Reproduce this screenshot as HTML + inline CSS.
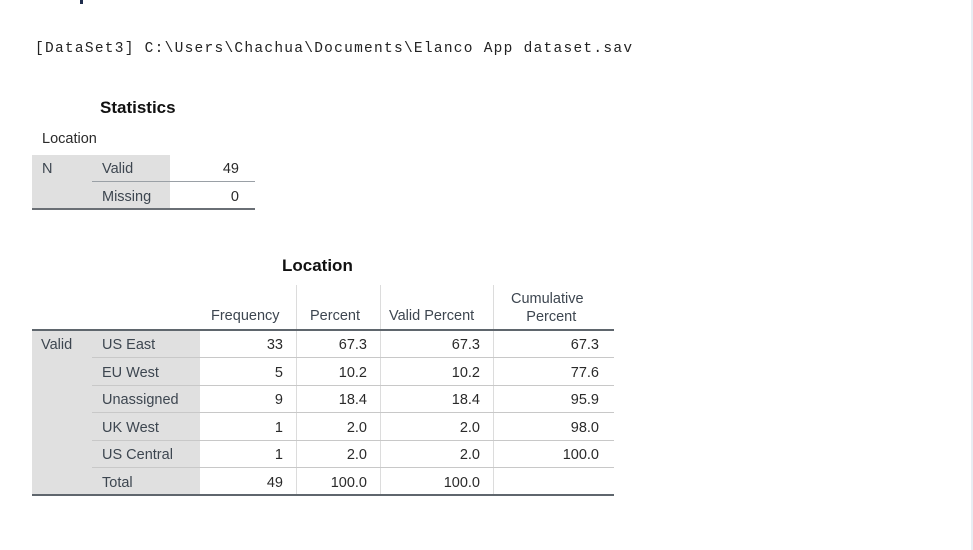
<!DOCTYPE html>
<html><head><style>
body{margin:0;width:973px;height:550px;background:#fff;position:relative;overflow:hidden;font-family:"Liberation Sans",sans-serif;}
.a{position:absolute;white-space:nowrap;}
.t{font-size:14.5px;color:#2a2a2a;}
.l{color:#3d4650;font-size:14.5px;}
.r{text-align:right;}
.g{position:absolute;background:#e0e0e0;}
.h{position:absolute;height:1px;background:#c8c8c8;}
.v{position:absolute;width:1px;background:#dcdcdc;}
</style></head><body>
<div style="position:absolute;left:80px;top:0;width:3px;height:4px;background:#1f2d4d"></div>
<div style="position:absolute;left:971px;top:0;width:2px;height:550px;background:#e8edf3"></div>
<div class="a" style="left:35px;top:41px;font-family:'Liberation Mono',monospace;font-size:14.5px;letter-spacing:1.27px;color:#222">[DataSet3] C:\Users\Chachua\Documents\Elanco App dataset.sav</div>
<div class="a" style="left:100px;top:98px;font-weight:bold;font-size:17px;color:#111">Statistics</div>
<div class="a t" style="left:42px;top:131px">Location</div>
<div class="g" style="left:32px;top:155px;width:138px;height:54px"></div>
<div class="h" style="left:92px;top:181px;width:163px;background:#9aa0a6"></div>
<div style="position:absolute;left:32px;top:208px;width:223px;height:2px;background:#6a6f75"></div>
<div class="a l" style="left:42px;top:161px">N</div>
<div class="a l" style="left:102px;top:161px">Valid</div>
<div class="a l" style="left:102px;top:189px">Missing</div>
<div class="a t r" style="left:180px;width:59px;top:161px">49</div>
<div class="a t r" style="left:180px;width:59px;top:189px">0</div>

<div class="a" style="left:282px;top:256px;font-weight:bold;font-size:17px;color:#111">Location</div>
<div class="g" style="left:32px;top:330px;width:168px;height:165px"></div>
<div class="v" style="left:296px;top:285px;height:210px"></div>
<div class="v" style="left:380px;top:285px;height:210px"></div>
<div class="v" style="left:493px;top:285px;height:210px"></div>
<div style="position:absolute;left:32px;top:329px;width:582px;height:2px;background:#5f666d"></div>
<div style="position:absolute;left:32px;top:494px;width:582px;height:2px;background:#5f666d"></div>
<div class="h" style="left:92px;top:357px;width:522px"></div>
<div class="h" style="left:92px;top:385px;width:522px"></div>
<div class="h" style="left:92px;top:412px;width:522px"></div>
<div class="h" style="left:92px;top:440px;width:522px"></div>
<div class="h" style="left:92px;top:467px;width:522px"></div>
<div class="a l" style="left:211px;top:308px">Frequency</div>
<div class="a l" style="left:310px;top:308px">Percent</div>
<div class="a l" style="left:389px;top:308px">Valid Percent</div>
<div class="a l" style="left:511px;top:290px;text-align:center;line-height:18px">Cumulative<br>&nbsp;&nbsp;Percent</div>
<div class="a l" style="left:41px;top:337px">Valid</div>
<div class="a l" style="left:102px;top:337px">US East</div>
<div class="a l" style="left:102px;top:365px">EU West</div>
<div class="a l" style="left:102px;top:392px">Unassigned</div>
<div class="a l" style="left:102px;top:420px">UK West</div>
<div class="a l" style="left:102px;top:447px">US Central</div>
<div class="a l" style="left:102px;top:475px">Total</div>
<div class="a t r" style="left:200px;width:83px;top:337px">33</div>
<div class="a t r" style="left:200px;width:83px;top:365px">5</div>
<div class="a t r" style="left:200px;width:83px;top:392px">9</div>
<div class="a t r" style="left:200px;width:83px;top:420px">1</div>
<div class="a t r" style="left:200px;width:83px;top:447px">1</div>
<div class="a t r" style="left:200px;width:83px;top:475px">49</div>
<div class="a t r" style="left:296px;width:71px;top:337px">67.3</div>
<div class="a t r" style="left:296px;width:71px;top:365px">10.2</div>
<div class="a t r" style="left:296px;width:71px;top:392px">18.4</div>
<div class="a t r" style="left:296px;width:71px;top:420px">2.0</div>
<div class="a t r" style="left:296px;width:71px;top:447px">2.0</div>
<div class="a t r" style="left:296px;width:71px;top:475px">100.0</div>
<div class="a t r" style="left:380px;width:100px;top:337px">67.3</div>
<div class="a t r" style="left:380px;width:100px;top:365px">10.2</div>
<div class="a t r" style="left:380px;width:100px;top:392px">18.4</div>
<div class="a t r" style="left:380px;width:100px;top:420px">2.0</div>
<div class="a t r" style="left:380px;width:100px;top:447px">2.0</div>
<div class="a t r" style="left:380px;width:100px;top:475px">100.0</div>
<div class="a t r" style="left:493px;width:106px;top:337px">67.3</div>
<div class="a t r" style="left:493px;width:106px;top:365px">77.6</div>
<div class="a t r" style="left:493px;width:106px;top:392px">95.9</div>
<div class="a t r" style="left:493px;width:106px;top:420px">98.0</div>
<div class="a t r" style="left:493px;width:106px;top:447px">100.0</div>
</body></html>
